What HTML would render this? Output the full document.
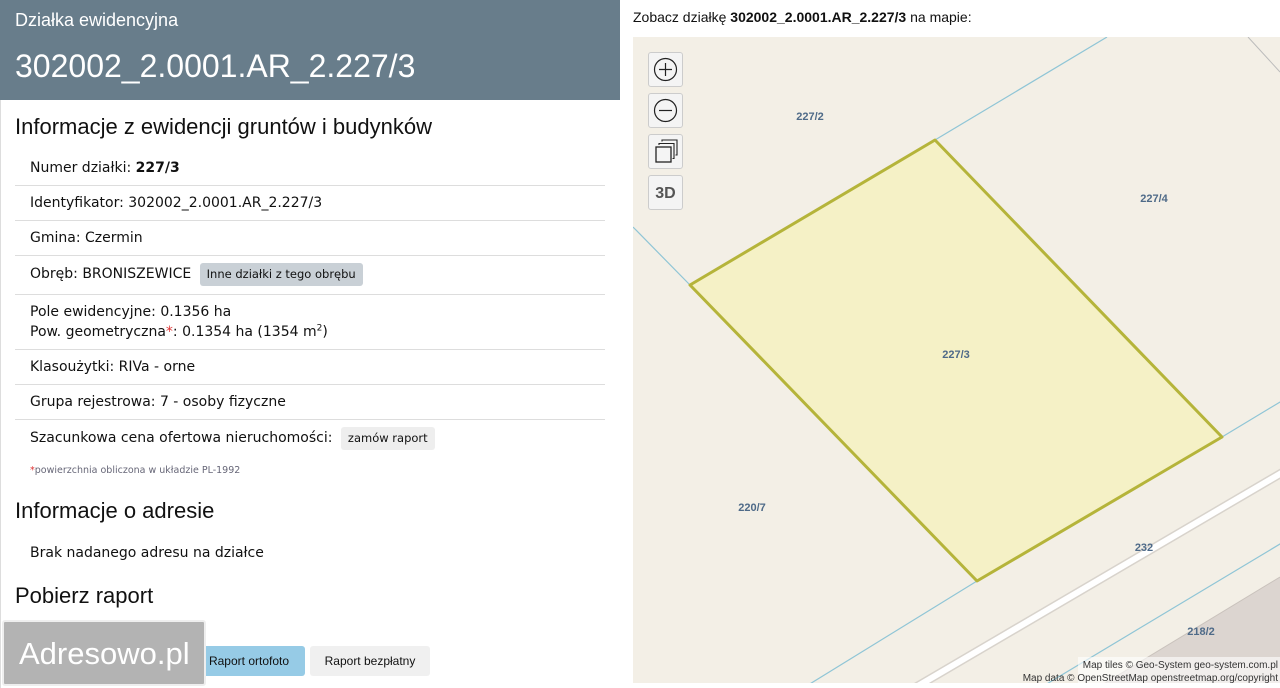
<!DOCTYPE html>
<html><head><meta charset="utf-8"><style>
html,body{margin:0;width:1280px;height:688px;overflow:hidden}
body{background:#fff;font-family:"Liberation Sans",sans-serif;position:relative}
.hdr{position:absolute;left:0;top:0;width:620px;height:100px;background:#687d8b;color:#fff}
.hdr .a{position:absolute;left:15px;top:10px;font-size:18px}
.hdr .b{position:absolute;left:15px;top:48px;font-size:32px}
.lp{position:absolute;left:0;top:100px;width:619px;height:588px;border-left:1px solid #ddd;box-sizing:border-box}
h2{position:absolute;left:15px;margin:0;font-weight:normal;font-size:22px;color:#111}
.row{position:absolute;left:15px;width:590px;border-bottom:1px solid #ddd;font-family:"DejaVu Sans",sans-serif;font-size:14px;color:#111;box-sizing:border-box;padding-left:15px}
.btn{display:inline-block;font-size:11.5px;border-radius:3px;padding:5px 7px;margin-left:4px;vertical-align:middle}
sup{line-height:0;font-size:9px}
.map{position:absolute;left:633px;top:37px;width:647px;height:646px;overflow:hidden}
.ctl{position:absolute;left:648px;width:35px;height:35px;border:1px solid #ccc;border-radius:3px;background:#f4f4f4;box-sizing:border-box}
</style></head><body>
<div class="hdr"><div class="a">Działka ewidencyjna</div><div class="b">302002_2.0001.AR_2.227/3</div></div>
<div class="lp"></div>
<h2 style="top:114px">Informacje z ewidencji gruntów i budynków</h2>
<div class="row" style="top:150px;height:36px;line-height:36px">Numer działki: <b>227/3</b></div>
<div class="row" style="top:186px;height:35px;line-height:35px">Identyfikator: 302002_2.0001.AR_2.227/3</div>
<div class="row" style="top:221px;height:35px;line-height:35px">Gmina: Czermin</div>
<div class="row" style="top:256px;height:39px;line-height:37px">Obręb: BRONISZEWICE <span class="btn" style="background:#c9d0d6;line-height:13px">Inne działki z tego obrębu</span></div>
<div class="row" style="top:295px;height:55px;padding-top:7px;line-height:20px">Pole ewidencyjne: 0.1356 ha<br>Pow. geometryczna<span style="color:#d33">*</span>: 0.1354 ha (1354 m<sup>2</sup>)</div>
<div class="row" style="top:350px;height:35px;line-height:35px">Klasoużytki: RIVa - orne</div>
<div class="row" style="top:385px;height:35px;line-height:35px">Grupa rejestrowa: 7 - osoby fizyczne</div>
<div class="row" style="top:420px;height:36px;line-height:36px;border:none">Szacunkowa cena ofertowa nieruchomości: <span class="btn" style="background:#eee;line-height:13px">zamów raport</span></div>
<div style="position:absolute;left:30px;top:465px;font-family:'DejaVu Sans',sans-serif;font-size:9.5px;color:#667"><span style="color:#d33">*</span>powierzchnia obliczona w układzie PL-1992</div>
<h2 style="top:498px">Informacje o adresie</h2>
<div style="position:absolute;left:30px;top:545px;font-family:'DejaVu Sans',sans-serif;font-size:14px;color:#111">Brak nadanego adresu na działce</div>
<h2 style="top:583px">Pobierz raport</h2>
<div style="position:absolute;left:193px;top:646px;width:112px;height:30px;background:#96cbe6;border-radius:3px;font-size:12px;line-height:30px;text-align:center;color:#111">Raport ortofoto</div>
<div style="position:absolute;left:310px;top:646px;width:120px;height:30px;background:#f0f0f0;border-radius:3px;font-size:12px;line-height:30px;text-align:center;color:#111">Raport bezpłatny</div>
<div style="position:absolute;left:2px;top:620px;width:204px;height:66px;background:#b3b3b3;border:2px solid #eee;border-radius:3px;box-sizing:border-box;color:#fff;font-size:31px;line-height:64px;padding-left:15px">Adresowo.pl</div>
<div style="position:absolute;left:633px;top:9px;font-size:14px;color:#111">Zobacz działkę <b>302002_2.0001.AR_2.227/3</b> na mapie:</div>
<div class="map"><svg width="647" height="646" viewBox="633 37 647 646">
<rect x="633" y="37" width="647" height="646" fill="#f3efe6"/>
<polygon points="1097,688 1280,577 1280,688" fill="#dcd5d0"/>
<line x1="1097" y1="688" x2="1280" y2="577" stroke="#c9c2bc" stroke-width="1"/>
<line x1="800" y1="755" x2="1290" y2="468" stroke="#d8d3cc" stroke-width="9"/>
<line x1="800" y1="755" x2="1290" y2="468" stroke="#fff" stroke-width="6"/>
<g stroke="#8fc5d6" stroke-width="1.2" fill="none">
<line x1="633" y1="227" x2="690" y2="285"/>
<line x1="935" y1="140" x2="1107" y2="37"/>
<line x1="1222" y1="437" x2="1290" y2="396"/>
<line x1="977" y1="581" x2="800" y2="690"/>
<line x1="1040" y1="688" x2="1290" y2="538"/>
</g>
<line x1="1248" y1="37" x2="1280" y2="72" stroke="#bbb" stroke-width="1"/>
<polygon points="935,140 1222,437 977,581 690,285" fill="#f5f1c6" stroke="#b5b43a" stroke-width="3" stroke-linejoin="round"/>
<g fill="#4e6a88" font-family="Liberation Sans,sans-serif" font-size="11" font-weight="bold" text-anchor="middle">
<text x="810" y="120">227/2</text><text x="1154" y="202">227/4</text><text x="956" y="358">227/3</text>
<text x="752" y="511">220/7</text><text x="1144" y="551">232</text><text x="1201" y="635">218/2</text></g>
<rect x="1078" y="657" width="202" height="26" fill="#fff" opacity="0.6"/>
<g font-family="Liberation Sans,sans-serif" font-size="10" fill="#333" text-anchor="end">
<text x="1278" y="668">Map tiles © Geo-System geo-system.com.pl</text>
<text x="1278" y="681">Map data © OpenStreetMap openstreetmap.org/copyright</text></g>
</svg></div>
<div class="ctl" style="top:52px"><svg width="33" height="33"><circle cx="16.5" cy="16.5" r="11" fill="none" stroke="#222" stroke-width="1.2"/><path d="M10 16.5h13M16.5 10v13" stroke="#222" stroke-width="1.2"/></svg></div>
<div class="ctl" style="top:93px"><svg width="33" height="33"><circle cx="16.5" cy="16.5" r="11" fill="none" stroke="#222" stroke-width="1.2"/><path d="M10 16.5h13" stroke="#222" stroke-width="1.2"/></svg></div>
<div class="ctl" style="top:134px"><svg width="33" height="33"><rect x="7" y="12" width="15" height="15" fill="none" stroke="#222" stroke-width="1.3"/><path d="M10 10V8.5h15v15h-1.5M13 6.5V5h15v15h-1.5" fill="none" stroke="#222" stroke-width="1.1"/></svg></div>
<div class="ctl" style="top:175px;font-weight:bold;font-size:16px;color:#555;text-align:center;line-height:36px">3D</div>
</body></html>
